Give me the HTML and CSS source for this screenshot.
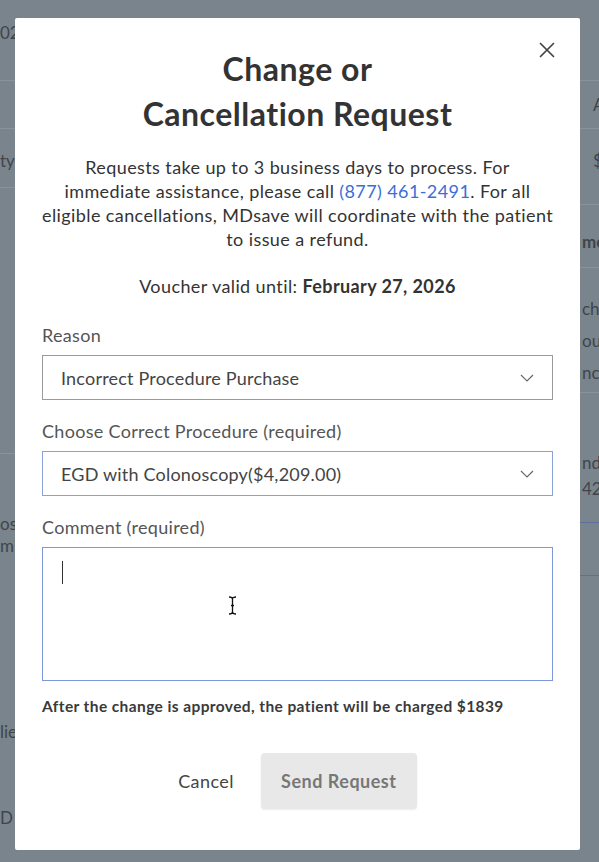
FILE: index.html
```html
<!DOCTYPE html>
<html lang="en">
<head>
<meta charset="utf-8">
<title>Change or Cancellation Request</title>
<link rel="stylesheet" href="styles.css">
</head>
<body>
<div class="page">
  <div class="bg-col bg-left">
    <div class="bg-row r-top"><span>02</span></div>
    <div class="bg-row r-2"></div>
    <div class="bg-row r-3"><span>ty</span></div>
    <div class="bg-row r-4"></div>
    <div class="bg-block b-left1"><span>os</span><span>mi</span></div>
    <div class="bg-block b-left2"><span>lie</span></div>
    <div class="bg-block b-left3"><span>D</span></div>
  </div>
  <div class="bg-gap"></div>
  <div class="bg-col bg-right">
    <div class="bg-row r-top"></div>
    <div class="bg-row r-2 pad-a"><span>A</span></div>
    <div class="bg-row r-3 pad-a"><span>$</span></div>
    <div class="bg-row r-5"><span class="strong">me</span></div>
    <div class="bg-row r-6"><span>che</span><span>ou</span><span>nc</span></div>
    <div class="bg-block b-right1"><span>nd</span><span>42</span></div>
    <div class="bg-box"></div>
  </div>
</div>

<div class="modal">
  <button class="close" aria-label="Close">
    <svg width="16" height="16" viewBox="0 0 16 16"><path d="M1.5 1.5 L14.5 14.5 M14.5 1.5 L1.5 14.5" stroke="#444" stroke-width="1.7" stroke-linecap="round" fill="none"/></svg>
  </button>
  <h1 class="title">Change or<br>Cancellation Request</h1>
  <p class="intro">Requests take up to 3 business days to process. For<br>immediate assistance, please call <a class="phone" href="#">(877) 461-2491</a>. For all<br>eligible cancellations, MDsave will coordinate with the patient<br>to issue a refund.</p>
  <p class="voucher">Voucher valid until: <strong>February 27, 2026</strong></p>

  <div class="field">
    <label class="label">Reason</label>
    <div class="select">
      <span>Incorrect Procedure Purchase</span>
      <svg class="chev" width="14" height="8" viewBox="0 0 14 8"><path d="M1 1 L7 7 L13 1" stroke="#666" stroke-width="1.2" fill="none"/></svg>
    </div>
  </div>

  <div class="field">
    <label class="label">Choose Correct Procedure (required)</label>
    <div class="select focus">
      <span>EGD with Colonoscopy($4,209.00)</span>
      <svg class="chev" width="14" height="8" viewBox="0 0 14 8"><path d="M1 1 L7 7 L13 1" stroke="#666" stroke-width="1.2" fill="none"/></svg>
    </div>
  </div>

  <div class="field">
    <label class="label">Comment (required)</label>
    <div class="textarea"><span class="caret"></span></div>
  </div>

  <p class="note">After the change is approved, the patient will be charged $1839</p>

  <div class="actions">
    <button class="btn-cancel">Cancel</button>
    <button class="btn-send">Send Request</button>
  </div>

  <svg class="ibeam" width="9" height="19" viewBox="0 0 9 19"><path d="M1 1 Q4.5 1 4.5 3 Q4.5 1 8 1 M4.5 3 V16 M1 18 Q4.5 18 4.5 16 Q4.5 18 8 18 M3 9.5 H6" stroke="#111" stroke-width="1.3" fill="none"/></svg>
</div>
</body>
</html>
```

FILE: styles.css
```css
* { box-sizing: border-box; }
html, body { margin: 0; padding: 0; }
body {
  width: 599px;
  height: 862px;
  overflow: hidden;
  background: #7a848d;
  font-family: Lato, "Open Sans", Arial, sans-serif;
  color: #333;
}

/* dimmed page behind the dialog */
.page {
  display: flex;
  height: 862px;
  color: #3f454b;
  font-size: 17px;
  line-height: 24px;
}
.bg-col { display: flex; flex-direction: column; overflow: hidden; }
.bg-left { width: 15px; overflow: visible; }
.bg-gap { width: 565px; }
.bg-right { width: 19px; }
.bg-row {
  display: flex;
  flex-direction: column;
  border-bottom: 1px solid #8a939a;
  white-space: nowrap;
}
.r-top { height: 81px; padding-top: 21px; }
.r-2 { height: 48px; padding-top: 12px; }
.r-3 { height: 59px; padding-top: 20px; }
.bg-left .r-4 { height: 266px; }
.bg-right .r-3 { height: 76px; }
.r-5 { height: 63px; padding-top: 25px; padding-left: 2px; }
.r-6 { height: 125px; padding-top: 25px; padding-left: 2px; line-height: 32px; }
.pad-a { padding-left: 13px; }
.strong { font-weight: 700; }
.bg-block { display: flex; flex-direction: column; white-space: nowrap; line-height: 22px; }
.b-left1 { padding-top: 59px; }
.b-left2 { padding-top: 164px; }
.b-left3 { padding-top: 64px; }
.b-right1 { padding-top: 57px; padding-left: 2px; line-height: 26px; }
.bg-box {
  margin-top: 20px;
  height: 54px;
  border-top: 1px solid #5f6e9c;
  border-bottom: 1px solid #5f6e9c;
}

/* dialog */
.modal {
  position: fixed;
  left: 15px;
  top: 18px;
  width: 565px;
  background: #fff;
  padding: 28px 27px 41px 27px;
  border-radius: 2px;
}
.close {
  position: absolute;
  top: 24px;
  right: 25px;
  width: 16px;
  height: 16px;
  padding: 0;
  border: 0;
  background: none;
  display: flex;
}
.title {
  margin: 0;
  text-align: center;
  font-size: 32px;
  line-height: 45px;
  font-weight: 700;
  color: #333;
  letter-spacing: 0.5px;
}
.intro {
  margin: 19px 0 0;
  text-align: center;
  font-size: 18px;
  line-height: 24px;
  letter-spacing: 0.4px;
  color: #333;
  white-space: nowrap;
}
.phone { color: #3a6fd6; text-decoration: none; }
.voucher {
  margin: 23px 0 0;
  text-align: center;
  font-size: 18px;
  line-height: 24px;
  letter-spacing: 0.4px;
  color: #333;
}
.voucher strong { font-weight: 700; }

.field { display: flex; flex-direction: column; gap: 8px; margin-top: 19px; }
.field:first-of-type { margin-top: 25px; }
.label {
  font-size: 18px;
  line-height: 24px;
  letter-spacing: 0.3px;
  color: #555;
}
.select {
  height: 45px;
  border: 1px solid #9b9b9b;
  display: flex;
  align-items: center;
  justify-content: space-between;
  padding: 0 18px 0 18px;
  font-size: 18px;
  letter-spacing: 0.2px;
  color: #444;
}
.select.focus { border-color: #8aa2d8; }
.chev { flex: none; }
.textarea {
  height: 134px;
  border: 1px solid #7d97d8;
  padding: 13px 19px;
}
.caret {
  display: block;
  width: 1px;
  height: 23px;
  background: #333;
}
.note {
  margin: 15px 0 0;
  font-size: 15.5px;
  line-height: 20px;
  letter-spacing: 0.4px;
  font-weight: 700;
  color: #3a3a3a;
}
.actions {
  margin-top: 37px;
  display: flex;
  justify-content: center;
  align-items: center;
  gap: 27px;
}
.btn-cancel {
  border: 0;
  background: none;
  padding: 0;
  font-family: inherit;
  font-size: 18px;
  letter-spacing: 0.4px;
  color: #444;
}
.btn-send {
  height: 56px;
  width: 156px;
  border: 0;
  border-radius: 4px;
  background: #e8e8e8;
  box-shadow: 0 1px 2px rgba(0,0,0,0.08);
  font-family: inherit;
  font-size: 18px;
  letter-spacing: 0.5px;
  font-weight: 700;
  color: #777;
}
.ibeam {
  position: absolute;
  left: 213px;
  top: 578px;
}
```
